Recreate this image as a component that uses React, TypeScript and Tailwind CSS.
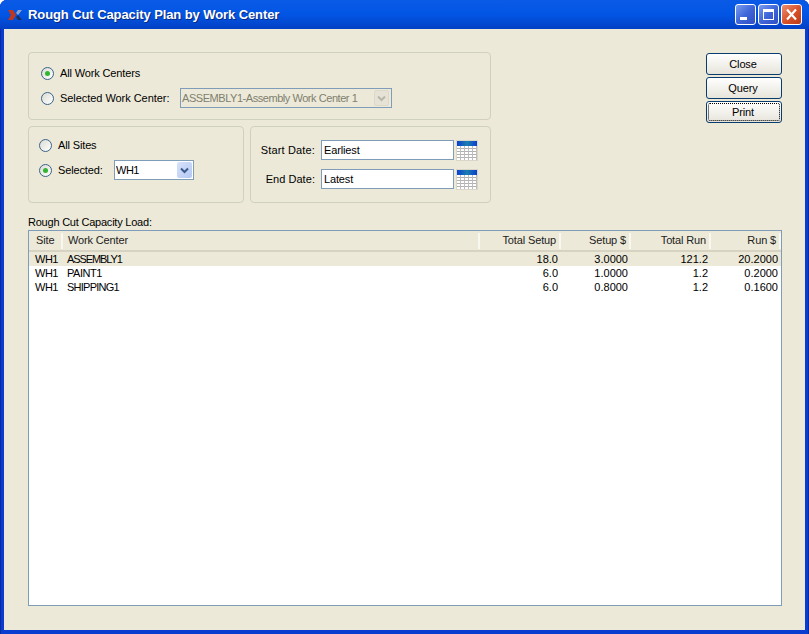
import React from "react";

const rows = [
  { site: "WH1", name: "ASSEMBLY1", track: "tracking-[-1.1px]", vals: ["18.0", "3.0000", "121.2", "20.2000"] },
  { site: "WH1", name: "PAINT1", track: "tracking-[-0.45px]", vals: ["6.0", "1.0000", "1.2", "0.2000"] },
  { site: "WH1", name: "SHIPPING1", track: "tracking-[-0.75px]", vals: ["6.0", "0.8000", "1.2", "0.1600"] },
];

const gridCols = "grid grid-cols-[34px_417px_81px_70px_80px_1fr]";

function Radio({ on }: { on?: boolean }) {
  return (
    <span className="w-[13px] h-[13px] shrink-0 rounded-full border border-[#3a6389] bg-gradient-to-br from-[#dcdcd4] to-white flex items-center justify-center">
      {on && <span className="w-[5px] h-[5px] rounded-full bg-[#33b533]" />}
    </span>
  );
}

function Calendar() {
  return (
    <svg width="22" height="21" viewBox="0 0 22 21" className="shrink-0">
      <defs>
        <linearGradient id="calTop" x1="0" x2="1" y1="0" y2="0">
          <stop offset="0" stopColor="#0a3fd0" />
          <stop offset="0.5" stopColor="#1c7fb0" />
          <stop offset="1" stopColor="#0a3fd0" />
        </linearGradient>
      </defs>
      <rect x="0" y="0" width="22" height="21" fill="#d8d6c8" />
      <rect x="1" y="1" width="20" height="19" fill="#fff" />
      <rect x="1" y="1" width="20" height="5" fill="url(#calTop)" />
      {[8, 11, 14, 17].map((y) => (
        <rect key={y} x="1" y={y} width="20" height="1" fill="#b0b0b0" />
      ))}
      {[4, 8, 12, 16, 20].map((x) => (
        <rect key={x} x={x} y="6" width="1" height="14" fill="#bcbcbc" />
      ))}
    </svg>
  );
}

function Chevron({ color }: { color: string }) {
  return (
    <svg width="9" height="7" viewBox="0 0 9 7">
      <path d="M1 1.5 L4.5 5 L8 1.5" fill="none" stroke={color} strokeWidth="2" />
    </svg>
  );
}

function Btn({ label, focus }: { label: string; focus?: boolean }) {
  return (
    <div className="h-[22px] rounded-[3px] border border-[#0a3c6e] bg-gradient-to-b from-white to-[#e6e4da] flex items-center justify-center pr-[2px] text-black relative">
      {focus && <span className="absolute inset-[1px] border border-dotted border-black rounded-[2px]" />}
      {label}
    </div>
  );
}

function WinBtn({ kind }: { kind: "min" | "max" | "close" }) {
  const bg =
    kind === "close"
      ? "bg-gradient-to-br from-[#ec8f70] via-[#d9532c] to-[#bb3a15]"
      : "bg-gradient-to-br from-[#7b9cf0] via-[#3f66d8] to-[#2f4fc4]";
  return (
    <div className={`w-[21px] h-[21px] rounded-[3px] border border-white flex items-center justify-center ${bg}`}>
      <svg width="15" height="15" viewBox="0 0 15 15">
        {kind === "min" && <rect x="2" y="10" width="7" height="3" fill="#fff" />}
        {kind === "max" && (
          <path d="M2 2 H13 V13 H2 Z M3 5 V12 H12 V5 Z" fill="#fff" fillRule="evenodd" />
        )}
        {kind === "close" && (
          <path d="M3 2.5 L12 12.5 M12 2.5 L3 12.5" stroke="#fff" strokeWidth="2.2" />
        )}
      </svg>
    </div>
  );
}

function Head({ label, right }: { label: string; right?: boolean }) {
  return (
    <div
      className={`flex items-center h-[16px] my-auto border-r-2 border-[#f8f7f0] ${
        right ? "justify-end pr-[3px]" : "pl-[5px]"
      }`}
    >
      {label}
    </div>
  );
}

export default function App() {
  return (
    <div
      className="w-[809px] h-[634px] flex flex-col overflow-hidden rounded-t-[7px] bg-[#0a3cd0] shadow-[inset_1px_0_0_#0a2aa0,inset_-1px_0_0_#0a2aa0] text-[11px] tracking-[-0.14px] text-black"
      style={{ fontFamily: '"Liberation Sans", sans-serif' }}
    >
      <div className="h-[29px] shrink-0 bg-gradient-to-b from-[#0a5ae6] via-[#0255e4] to-[#0340c4] flex items-center pl-[8px] pr-[7px]">
        <svg width="14" height="12" viewBox="0 0 14 12" className="shrink-0">
          <path d="M0 1 H5 L8 6 L5 11 H0 L3 6 Z" fill="#c2371c" />
          <path d="M8 4 L10 1 H14 L10 6 Z" fill="#8fa4c8" />
          <path d="M8 8 L10 11 H14 L10 6 Z" fill="#1c2f5c" />
        </svg>
        <div
          className="ml-[6px] text-white font-bold text-[13px] tracking-[-0.09px]"
          style={{ textShadow: "1px 1px 0 #0a2a80" }}
        >
          Rough Cut Capacity Plan by Work Center
        </div>
        <div className="ml-auto flex gap-[2px]">
          <WinBtn kind="min" />
          <WinBtn kind="max" />
          <WinBtn kind="close" />
        </div>
      </div>

      <div className="mx-[4px] h-[601px] bg-[#ece9d8] pt-[23px] pl-[24px] pr-[23px] flex flex-col">
        <div className="flex justify-between h-[151px]">
          <div className="w-[463px] flex flex-col gap-[6px]">
            <div className="h-[68px] rounded-[4px] border border-[#d0d0bf] pl-[12px] pt-[12px] flex flex-col gap-[7px]">
              <div className="flex items-center h-[16px] gap-[6px]">
                <Radio on />
                All Work Centers
              </div>
              <div className="flex items-center h-[20px] gap-[6px]">
                <Radio />
                <span className="w-[114px] tracking-[-0.05px]">Selected Work Center:</span>
                <div className="w-[212px] h-[20px] border border-[#7f9db9] bg-[#ece9d8] flex items-center pl-[1px] pr-[2px] text-[#80806f]">
                  <span className="flex-1 tracking-[-0.45px]">ASSEMBLY1-Assembly Work Center 1</span>
                  <span className="w-[15px] h-[16px] rounded-[2px] bg-[#e6e3d6] border border-[#dcd9ca] flex items-center justify-center">
                    <Chevron color="#b8b6a8" />
                  </span>
                </div>
              </div>
            </div>
            <div className="flex gap-[6px] h-[77px]">
              <div className="w-[216px] rounded-[4px] border border-[#d0d0bf] pl-[10px] pt-[10px] flex flex-col gap-[7px]">
                <div className="flex items-center h-[16px] gap-[6px]">
                  <Radio />
                  All Sites
                </div>
                <div className="flex items-center h-[20px] gap-[6px]">
                  <Radio on />
                  <span className="w-[50px]">Selected:</span>
                  <div className="w-[80px] h-[20px] border border-[#7f9db9] bg-white flex items-center pl-[1px] pr-[1px]">
                    <span className="flex-1 tracking-[-0.5px]">WH1</span>
                    <span className="w-[15px] h-[16px] rounded-[2px] bg-gradient-to-br from-[#d8e2fa] to-[#b4c8f4] flex items-center justify-center">
                      <Chevron color="#3d5a8c" />
                    </span>
                  </div>
                </div>
              </div>
              <div className="flex-1 rounded-[4px] border border-[#d0d0bf] pt-[13px] pl-[6px] flex flex-col gap-[9px]">
                <div className="flex items-center h-[20px]">
                  <span className="w-[58px] text-right whitespace-nowrap mr-[6px] tracking-[0.15px]">Start Date:</span>
                  <div className="w-[133px] h-[20px] border border-[#7f9db9] bg-white flex items-center pl-[2px] mr-[2px]">Earliest</div>
                  <Calendar />
                </div>
                <div className="flex items-center h-[20px]">
                  <span className="w-[58px] text-right whitespace-nowrap mr-[6px] tracking-[0.05px]">End Date:</span>
                  <div className="w-[133px] h-[20px] border border-[#7f9db9] bg-white flex items-center pl-[2px] mr-[2px]">Latest</div>
                  <Calendar />
                </div>
              </div>
            </div>
          </div>
          <div className="w-[76px] flex flex-col gap-[2px] pt-[1px]">
            <Btn label="Close" />
            <Btn label="Query" />
            <Btn label="Print" focus />
          </div>
        </div>

        <div className="mt-[11px] h-[16px] flex items-center tracking-[-0.22px]">Rough Cut Capacity Load:</div>

        <div className="h-[376px] border border-[#7f9db9] bg-white">
          <div className={`${gridCols} h-[21px] bg-[#ece9d8] border-b-2 border-[#d6d3c3] text-[#222]`}>
            <div className="flex items-center h-[16px] my-auto pl-[7px] border-r-2 border-[#f8f7f0]">Site</div>
            <Head label="Work Center" />
            <Head label="Total Setup" right />
            <Head label="Setup $" right />
            <Head label="Total Run" right />
            <Head label="Run $" right />
          </div>
          {rows.map((r, i) => (
            <div key={r.name} className={`${gridCols} h-[14px] items-center leading-[14px] ${i === 0 ? "bg-[#ece9d8]" : ""}`}>
              <div className="pl-[6px] tracking-[-0.5px]">{r.site}</div>
              <div className={`pl-[4px] ${r.track}`}>{r.name}</div>
              {r.vals.map((c, j) => (
                <div key={j} className="text-right pr-[3px] tracking-[0px]">{c}</div>
              ))}
            </div>
          ))}
        </div>
      </div>
    </div>
  );
}
